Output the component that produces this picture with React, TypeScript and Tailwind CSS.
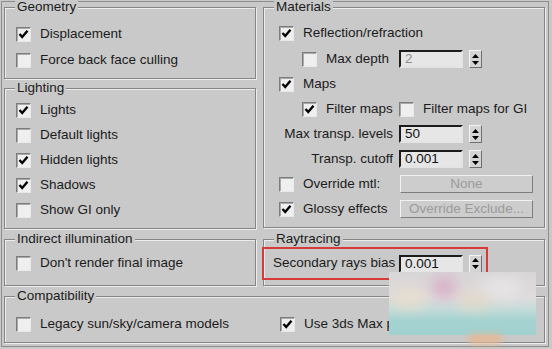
import React from 'react'

const PANEL = 'bg-[#c9c9c9]'

const Check = ({ checked = false }: { checked?: boolean }) => (
  <span className="flex h-[15px] w-[15px] shrink-0 items-center justify-center border border-t-[#7c7c7c] border-l-[#7c7c7c] border-r-[#e9e9e9] border-b-[#e9e9e9] bg-[#efefef] shadow-[inset_1px_1px_0_#a9a9a9]">
    {checked && (
      <svg width="11" height="11" viewBox="0 0 11 11">
        <polyline points="1.5,5 4.2,8 9.5,1.8" fill="none" stroke="#000" strokeWidth="2.4" />
      </svg>
    )}
  </span>
)

const CheckRow = ({ checked, label, className = '' }: { checked?: boolean, label: string, className?: string }) => (
  <div className={`flex h-[25px] items-center ${className}`}>
    <Check checked={checked} />
    <span className="ml-[9px] whitespace-nowrap">{label}</span>
  </div>
)

const Spinner = () => (
  <span className="ml-[6px] flex h-[18px] w-[13px] flex-col items-center justify-center gap-[3px] border border-t-[#f4f4f4] border-l-[#f4f4f4] border-r-[#6f6f6f] border-b-[#6f6f6f] bg-[#d4d4d4]">
    <svg width="7" height="4" viewBox="0 0 7 4"><polygon points="0,4 3.5,0 7,4" fill="#000" /></svg>
    <svg width="7" height="4" viewBox="0 0 7 4"><polygon points="0,0 7,0 3.5,4" fill="#000" /></svg>
  </span>
)

const NumField = ({ value, disabled = false }: { value: string, disabled?: boolean }) => (
  <div className="flex items-center">
    <span
      className={`flex h-[18px] w-[64px] items-center border-2 border-t-[#1c1c1c] border-l-[#1c1c1c] border-r-[#e4e4e4] border-b-[#e4e4e4] bg-[#e6e6e6] pl-[4px] leading-none ${disabled ? 'text-[#8e8e8e]' : 'text-[#111]'}`}
    >
      {value}
    </span>
    <Spinner />
  </div>
)

const FlatButton = ({ label }: { label: string }) => (
  <span className="flex h-[18px] w-[133px] items-center justify-center border border-t-[#f2f2f2] border-l-[#f2f2f2] border-r-[#7d7d7d] border-b-[#7d7d7d] bg-[#cdcdcd] text-[#9b9b9b]">
    {label}
  </span>
)

const Group = ({ title, className = '', children }: { title: string, className?: string, children?: React.ReactNode }) => (
  <div className={`relative border border-[#858585] shadow-[inset_1px_1px_0_#ededed,1px_1px_0_#ededed] ${className}`}>
    <span className={`absolute -top-[9px] left-[10px] px-[2px] leading-[16px] ${PANEL}`}>{title}</span>
    {children}
  </div>
)

const App = () => {
  return (
    <div className={`relative h-[349px] w-[552px] overflow-hidden pl-[1px] pt-[1px] font-['Liberation_Sans',Arial,sans-serif] text-[13.5px] text-[#1b1b1b] ${PANEL}`}>
      {/* outer frame */}
      <div className="h-[346px] w-[548px] border border-[#8d8d8d] pl-[2px] pt-[5px]">
        <div className="flex gap-[7px]">
          {/* left column */}
          <div className="flex w-[252px] flex-col">
            <Group title="Geometry" className="h-[72px] pl-[11px] pt-[13px]">
              <CheckRow checked label="Displacement" className="h-[26px]" />
              <CheckRow label="Force back face culling" className="h-[26px]" />
            </Group>
            <Group title="Lighting" className="mt-[9px] h-[141px] pl-[11px] pt-[9px]">
              <CheckRow checked label="Lights" />
              <CheckRow label="Default lights" />
              <CheckRow checked label="Hidden lights" />
              <CheckRow checked label="Shadows" />
              <CheckRow label="Show GI only" />
            </Group>
            <Group title="Indirect illumination" className="mt-[10px] h-[47px] pl-[11px] pt-[11px]">
              <CheckRow label="Don't render final image" />
            </Group>
          </div>

          {/* right column */}
          <div className="flex w-[282px] flex-col">
            <Group title="Materials" className="h-[221px] pt-[13px]">
              <CheckRow checked label="Reflection/refraction" className="pl-[15px]" />
              <div className="flex h-[26px] items-center pl-[38px]">
                <Check />
                <span className="ml-[9px] w-[73px] whitespace-nowrap">Max depth</span>
                <NumField value="2" disabled />
              </div>
              <CheckRow checked label="Maps" className="pl-[15px]" />
              <div className="flex h-[24px] items-center pl-[38px]">
                <Check checked />
                <span className="ml-[9px] w-[73px] whitespace-nowrap">Filter maps</span>
                <Check />
                <span className="ml-[9px] whitespace-nowrap">Filter maps for GI</span>
              </div>
              <div className="flex h-[26px] items-center">
                <span className="w-[129px] whitespace-nowrap text-right">Max transp. levels</span>
                <span className="ml-[6px]"><NumField value="50" /></span>
              </div>
              <div className="flex h-[24px] items-center">
                <span className="w-[129px] whitespace-nowrap text-right">Transp. cutoff</span>
                <span className="ml-[6px]"><NumField value="0.001" /></span>
              </div>
              <div className="flex h-[26px] items-center pl-[15px]">
                <Check />
                <span className="ml-[9px] w-[97px] whitespace-nowrap">Override mtl:</span>
                <FlatButton label="None" />
              </div>
              <div className="flex h-[24px] items-center pl-[15px]">
                <Check checked />
                <span className="ml-[9px] w-[97px] whitespace-nowrap">Glossy effects</span>
                <FlatButton label="Override Exclude..." />
              </div>
            </Group>
            <Group title="Raytracing" className="mt-[11px] h-[47px] pt-[11px]">
              <div className="flex h-[25px] items-center pl-[9px]">
                <span className="w-[126px] whitespace-nowrap">Secondary rays bias</span>
                <NumField value="0.001" />
              </div>
            </Group>
          </div>
        </div>

        <Group title="Compatibility" className="mt-[10px] h-[47px] w-[541px] pt-[15px]">
          <div className="flex items-center">
            <CheckRow label="Legacy sun/sky/camera models" className="w-[275px] pl-[11px]" />
            <CheckRow checked label="Use 3ds Max physical scale" />
          </div>
        </Group>
      </div>

      {/* red highlight around the raytracing row */}
      <div className="absolute left-[262px] top-[247px] h-[33px] w-[226px] border-2 border-[#d83a3a]" />

      {/* blurred watermark patch */}
      <div className="absolute left-[389px] top-[272px] h-[63px] w-[147px] overflow-hidden bg-[linear-gradient(to_bottom,#d8d6d7_0%,#e0dbdd_40%,#c6dcda_58%,#a6d3d1_76%,#a0d1cf_100%)]">
        <div className="absolute left-[42px] top-[4px] h-[22px] w-[26px] rounded-full bg-[#d8b2c8] blur-[7px]" />
        <div className="absolute left-[4px] top-[16px] h-[20px] w-[32px] rounded-full bg-[#e6ddcc] blur-[7px]" />
        <div className="absolute left-[92px] top-[6px] h-[20px] w-[40px] rounded-full bg-[#e6e5e5] blur-[7px]" />
        <div className="absolute left-[70px] top-[22px] h-[14px] w-[30px] rounded-full bg-[#e4d8c4] blur-[7px]" />
      </div>
      <div className="absolute left-[468px] top-[334px] h-[10px] w-[34px] rounded-full bg-[#e3b996] blur-[3px]" />
    </div>
  )
}

export default App
